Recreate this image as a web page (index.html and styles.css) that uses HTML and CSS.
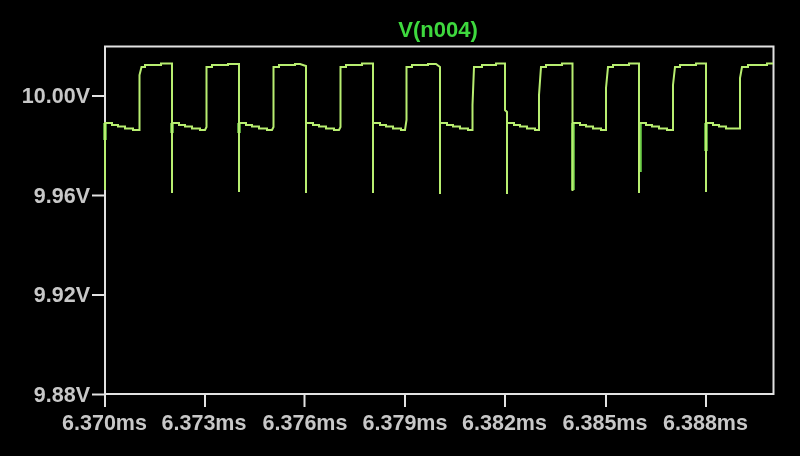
FILE: index.html
```html
<!DOCTYPE html>
<html lang="en">
<head>
<meta charset="utf-8">
<title>V(n004)</title>
<link rel="stylesheet" href="styles.css">
</head>
<body>
<svg class="plot" viewBox="0 0 800 456" width="800" height="456" xmlns="http://www.w3.org/2000/svg">
  <text class="title" x="438" y="37">V(n004)</text>
  <path class="frame" d="M105 46.500H773.500V394H105ZM92 96H105M92 195.500H105M92 295H105M92 394.500H105M105 394V407M205 394V407M304.500 394V407M405 394V407M505 394V407M606 394V407M706 394V407"/>
  <g class="ylabels">
    <text x="90" y="103">10.00V</text>
    <text x="90" y="203">9.96V</text>
    <text x="90" y="302">9.92V</text>
    <text x="90" y="402">9.88V</text>
  </g>
  <g class="xlabels">
    <text x="104.500" y="430">6.370ms</text>
    <text x="204" y="430">6.373ms</text>
    <text x="305" y="430">6.376ms</text>
    <text x="405" y="430">6.379ms</text>
    <text x="504.500" y="430">6.382ms</text>
    <text x="605" y="430">6.385ms</text>
    <text x="705.500" y="430">6.388ms</text>
  </g>
  <path class="glow" d="M105 123V140M172 123V133M239 123V133M573 123V190M640 123V172M706 123V151"/>
  <path class="trace" d="M105 190V123L107 123H112V125H118V126.500H125V128.500H133V130H139.500V75L141.500 67H145V65H161V63.500H166L172 63.500V193V123
  H179V125H185V126.500H192V128.500H200V130H205L206.500 127V67H212V65H228V64H233H239V192V123
  H246V125H252V126.500H259V128.500H267V130H272L273.500 127V67H279V65H295V64H300L306 66V193V123
  H313V125H319V126.500H326V128.500H334V130H339L340.500 127V67H346V65H362V63.500H373V193V123
  H380V125H386V126.500H393V128.500H401V130H405L406.500 120V67H412V65H428V64H436L440 67V194V123
  H447V125H453V126.500H460V128.500H468V130H472.500V105L474 67H482V65H496V63.500H505V110L507 112V194V123
  H514V125H520V126.500H527V128.500H535V130H539V95L541 67H546V65H562V63.500H572.500V191V123
  H580V125H586V126.500H593V128.500H601V130H606V88L608 67H613V65H629V63.500H639V193V123
  H646V125H652V126.500H659V128.500H667V130H673V85L675 67H680V65H696V63.500H706V192V123
  H713V125H719V126.500H726V128.500H740V78L742 67H748V65H767V63.500H773"/>
</svg>
</body>
</html>
```
FILE: styles.css
```css
html, body {
  margin: 0;
  padding: 0;
  background: #000;
}

.plot {
  display: block;
  filter: blur(0.45px);
}

.plot text {
  font-family: "Liberation Sans", Arial, sans-serif;
  font-weight: 700;
}

.title {
  font-size: 22px;
  fill: #3ed83e;
  text-anchor: middle;
}

.ylabels text {
  font-size: 21.500px;
  fill: #c8c8c8;
  text-anchor: end;
}

.xlabels text {
  font-size: 21.500px;
  fill: #c8c8c8;
  text-anchor: middle;
}

.frame {
  fill: none;
  stroke: #e2e2e2;
  stroke-width: 2;
}

.glow {
  fill: none;
  stroke: #6fd04a;
  stroke-width: 3.500;
}

.trace {
  fill: none;
  stroke: #b8ee70;
  stroke-width: 2;
}
```
